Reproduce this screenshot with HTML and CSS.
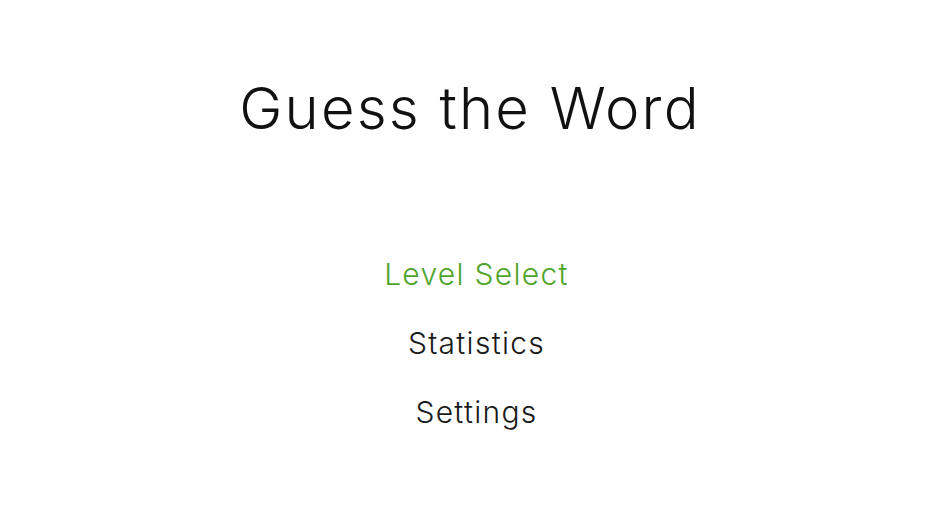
FILE: index.html
```html
<!DOCTYPE html>
<html lang="en">
<head>
<meta charset="utf-8">
<title>Guess the Word</title>
<link rel="stylesheet" href="styles.css">
</head>
<body>
<main class="screen">
  <h1 class="title">Guess the Word</h1>
  <nav class="menu">
    <a class="menu-item active" href="#">Level Select</a>
    <a class="menu-item" href="#">Statistics</a>
    <a class="menu-item" href="#">Settings</a>
  </nav>
</main>
</body>
</html>
```

FILE: styles.css
```css
html, body {
  margin: 0;
  padding: 0;
  background: #ffffff;
}
body {
  font-family: "Inter", "Noto Sans", sans-serif;
  font-weight: 300;
  color: #111111;
}
.screen {
  width: 940px;
  height: 529px;
  display: flex;
  flex-direction: column;
  align-items: center;
}
.title {
  margin: 72px 0 0;
  font-size: 58px;
  font-weight: 300;
  line-height: 72px;
  letter-spacing: 2.2px;
  color: #111111;
}
.menu {
  margin-top: 110px;
  margin-left: 13px;
  display: flex;
  flex-direction: column;
  align-items: center;
  gap: 29px;
}
.menu-item {
  font-size: 30px;
  line-height: 40px;
  text-decoration: none;
  color: #1a1a1a;
  letter-spacing: 1.3px;
}
.menu-item.active {
  color: #4fa52c;
}
```
